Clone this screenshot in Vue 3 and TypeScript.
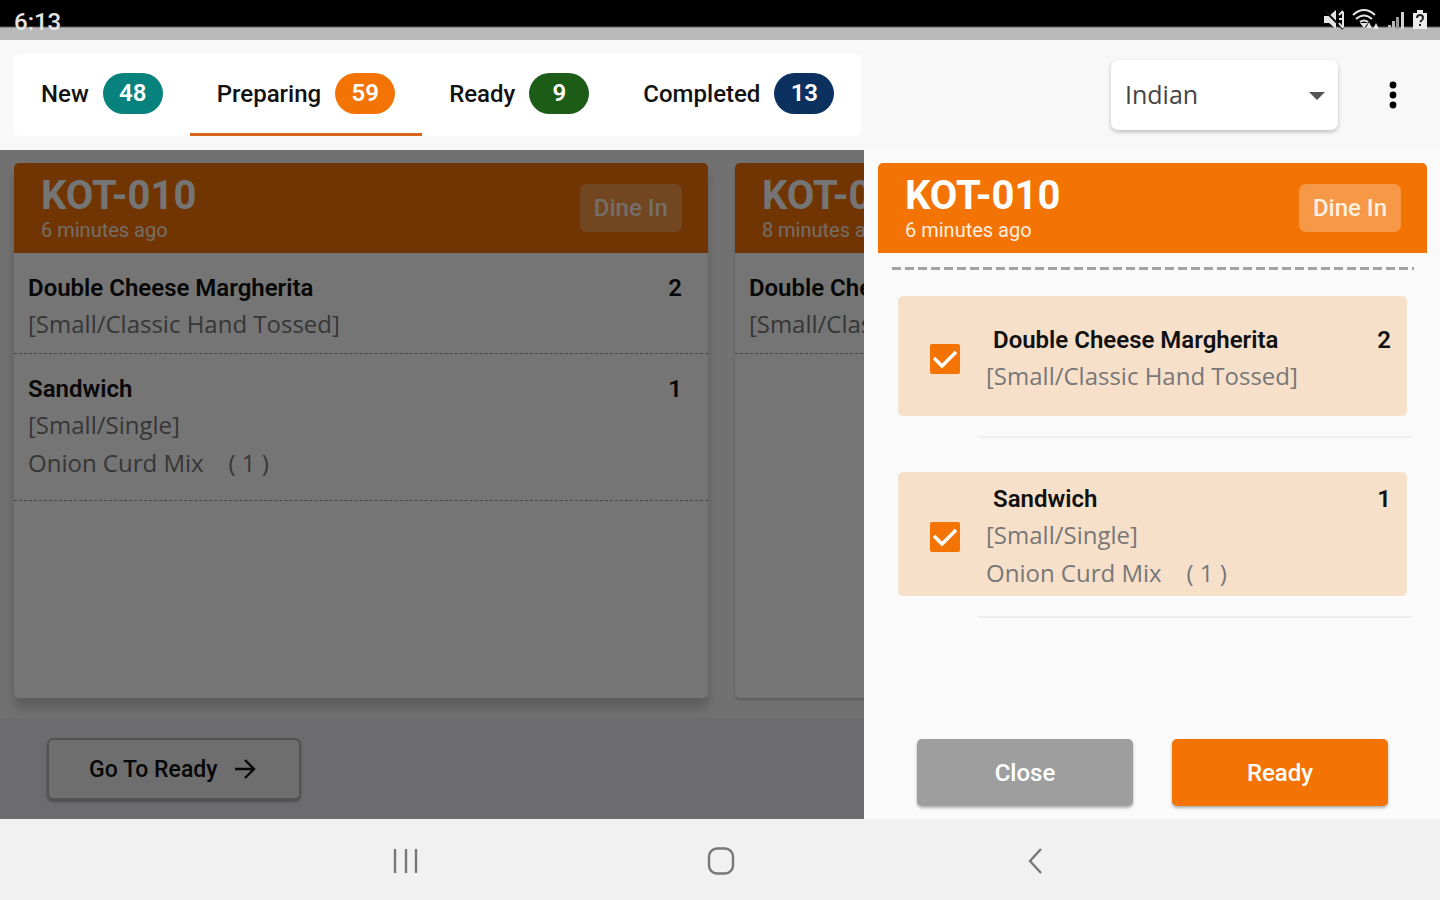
<script setup lang="ts">
import { computed, ref } from 'vue'

interface OrderItem {
  id: string
  name: string
  qty: number
  lines: string[]
  done: boolean
}

interface Ticket {
  id: string
  code: string
  age: string
  type: string
  items: OrderItem[]
}

const tabs = [
  { key: 'new', label: 'New', count: 48 },
  { key: 'preparing', label: 'Preparing', count: 59 },
  { key: 'ready', label: 'Ready', count: 9 },
  { key: 'completed', label: 'Completed', count: 13 },
]
const activeTab = ref('preparing')
const kitchen = ref('Indian')

const margherita = (id: string): OrderItem => ({
  id,
  name: 'Double Cheese Margherita',
  qty: 2,
  lines: ['[Small/Classic Hand Tossed]'],
  done: true,
})

const tickets = ref<Ticket[]>([
  {
    id: 't1',
    code: 'KOT-010',
    age: '6 minutes ago',
    type: 'Dine In',
    items: [
      margherita('t1-a'),
      {
        id: 't1-b',
        name: 'Sandwich',
        qty: 1,
        lines: ['[Small/Single]', 'Onion Curd Mix \u00a0\u00a0 ( 1 )'],
        done: true,
      },
    ],
  },
  { id: 't2', code: 'KOT-009', age: '8 minutes ago', type: 'Dine In', items: [margherita('t2-a')] },
])
const selected = computed(() => tickets.value[0])
</script>

<template>
  <div class="screen">
    <div class="status">
      <span class="clock">6:13</span>
      <div class="status-icons">
        <svg width="22" height="22" viewBox="0 0 22 22" aria-hidden="true">
          <path d="M1 7h5l7-6v19l-7-6H1z" fill="#e4e4e4" />
          <path d="M2 2l18 18" stroke="#111" stroke-width="2" />
          <path d="M16 6l4-4M16 10h4M16 14l4 5M20 3v15" stroke="#e4e4e4" stroke-width="2" fill="none" />
        </svg>
        <svg width="28" height="22" viewBox="0 0 28 22" aria-hidden="true">
          <path d="M1 6q11-10 22 0M4 10q8-7 16 0M8 13q4-3 8 0" stroke="#e4e4e4" stroke-width="2" fill="none" />
          <path d="M8 14h8l-4 5zM17 13l3 6h-6zM21 20l3-6 3 6z" fill="#e4e4e4" />
        </svg>
        <svg width="18" height="22" viewBox="0 0 18 22" aria-hidden="true">
          <path d="M1 16h3v4H1zM5 12h3v8H5z" fill="#b8b8b8" />
          <path d="M9 8h3v12H9z" fill="#999" />
          <path d="M14 3h3v17h-3z" fill="#d4d4d4" />
        </svg>
        <svg width="16" height="22" viewBox="0 0 16 22" aria-hidden="true">
          <path d="M5 1h6v3h4v16H1V4h4z" fill="#ececec" />
          <path d="M5 9q0-3 3-3t3 3q0 2-3 4M8 15v2" stroke="#222" stroke-width="2" fill="none" />
        </svg>
      </div>
    </div>

    <header class="topbar">
      <div class="tabs" role="tablist">
        <button
          v-for="tab in tabs"
          :key="tab.key"
          type="button"
          role="tab"
          class="tab"
          :class="{ active: tab.key === activeTab }"
          :aria-selected="tab.key === activeTab"
          @click="activeTab = tab.key"
        >
          {{ tab.label }}
          <span class="count" :class="tab.key">{{ tab.count }}</span>
        </button>
      </div>
      <div class="picker">
        <select v-model="kitchen" aria-label="Kitchen">
          <option>Indian</option>
        </select>
        <svg class="caret" width="16" height="8" viewBox="0 0 16 8" aria-hidden="true">
          <path d="M0 0h16L8 8z" fill="#555" />
        </svg>
      </div>
      <button type="button" class="more" aria-label="More options">
        <svg width="8" height="28" viewBox="0 0 8 28" aria-hidden="true">
          <circle cx="4" cy="4" r="3.4" /><circle cx="4" cy="14" r="3.4" /><circle cx="4" cy="24" r="3.4" />
        </svg>
      </button>
    </header>

    <div class="workspace">
      <main class="board">
        <div class="tickets">
          <article v-for="ticket in tickets" :key="ticket.id" class="ticket">
            <div class="ticket-head">
              <div>
                <h2>{{ ticket.code }}</h2>
                <p>{{ ticket.age }}</p>
              </div>
              <span class="type">{{ ticket.type }}</span>
            </div>
            <ul class="lines">
              <li v-for="item in ticket.items" :key="item.id">
                <div class="row"><strong>{{ item.name }}</strong><strong>{{ item.qty }}</strong></div>
                <p v-for="(line, i) in item.lines" :key="line" :class="{ addon: i > 0 }">{{ line }}</p>
              </li>
            </ul>
          </article>
        </div>
        <div class="board-foot">
          <button type="button" class="goto">
            Go To Ready
            <svg width="22" height="20" viewBox="0 0 22 20" aria-hidden="true">
              <path d="M1 10h19M11 1l9 9-9 9" stroke="#111" stroke-width="2.4" fill="none" />
            </svg>
          </button>
        </div>
        <div class="scrim"></div>
      </main>

      <aside class="drawer">
        <div class="ticket-head">
          <div>
            <h2>{{ selected.code }}</h2>
            <p>{{ selected.age }}</p>
          </div>
          <span class="type">{{ selected.type }}</span>
        </div>
        <div class="perforation"></div>
        <ul class="checks">
          <li v-for="item in selected.items" :key="item.id">
            <label class="check">
              <span class="box">
                <input v-model="item.done" type="checkbox" />
                <svg width="30" height="30" viewBox="0 0 30 30" aria-hidden="true">
                  <path d="M4 14l8 8L26 8" stroke="#fff" stroke-width="3.4" fill="none" />
                </svg>
              </span>
              <span class="detail">
                <span class="row name"><strong>{{ item.name }}</strong><strong>{{ item.qty }}</strong></span>
                <span v-for="line in item.lines" :key="line" class="option">{{ line }}</span>
              </span>
            </label>
          </li>
        </ul>
        <div class="actions">
          <button type="button" class="close">Close</button>
          <button type="button" class="ready">Ready</button>
        </div>
      </aside>
    </div>

    <nav class="system">
      <button type="button" aria-label="Recent apps">
        <svg width="28" height="28" viewBox="0 0 28 28" aria-hidden="true">
          <path d="M3 2v24M14 2v24M24 2v24" />
        </svg>
      </button>
      <button type="button" aria-label="Home">
        <svg width="28" height="28" viewBox="0 0 28 28" aria-hidden="true">
          <rect x="2" y="1.5" width="24" height="25" rx="8" />
        </svg>
      </button>
      <button type="button" aria-label="Back">
        <svg width="28" height="28" viewBox="0 0 28 28" aria-hidden="true">
          <path d="M19 2L8 14l11 12" />
        </svg>
      </button>
    </nav>
  </div>
</template>

<style>
body {
  margin: 0;
}
</style>

<style scoped>
.screen {
  display: flex;
  flex-direction: column;
  min-height: 100vh;
  font-family: Roboto, 'Liberation Sans', sans-serif;
  font-size: 24px;
  color: #111;
  background: #fafafa;
}
* {
  box-sizing: border-box;
}
button,
select {
  font: inherit;
  color: inherit;
  border: 0;
  margin: 0;
  padding: 0;
  background: none;
}
h2,
p,
ul {
  margin: 0;
  padding: 0;
  list-style: none;
}
strong {
  font-weight: 600;
}

.status {
  display: flex;
  align-items: center;
  justify-content: space-between;
  height: 40px;
  padding: 0 12px 0 14px;
  color: #e4e4e4;
  background: linear-gradient(#000 26px, #b9b9b9 28px);
}
.clock {
  padding-top: 4px;
  font-weight: 500;
}
.status-icons {
  display: flex;
  gap: 7px;
}

.topbar {
  display: flex;
  align-items: center;
  height: 110px;
  padding: 0 27px 0 14px;
  background: #f8f8f8;
}
.tabs {
  display: flex;
  height: 82px;
  background: #fff;
  border-radius: 6px;
}
.tab {
  display: flex;
  align-items: center;
  gap: 14px;
  padding: 0 27px;
  font-weight: 500;
  border-bottom: 3px solid transparent;
}
.tab.active {
  border-bottom-color: #d8651b;
}
.count {
  width: 60px;
  border-radius: 21px;
  line-height: 41px;
  text-align: center;
  font-weight: 600;
  color: #fff;
}
.count.new {
  background: #07827d;
}
.count.preparing {
  background: #f37405;
}
.count.ready {
  background: #1c5c17;
}
.count.completed {
  background: #0c315f;
}
.picker {
  position: relative;
  width: 227px;
  margin-left: auto;
}
.picker select {
  display: block;
  width: 100%;
  height: 70px;
  padding: 0 40px 2px 14px;
  appearance: none;
  font-family: 'Open Sans', 'Noto Sans', sans-serif;
  font-size: 25px;
  color: #444;
  background: #fff;
  border-radius: 7px;
  box-shadow: 0 2px 4px rgba(0, 0, 0, 0.24);
}
.caret {
  position: absolute;
  top: 32px;
  right: 13px;
  pointer-events: none;
}
.more {
  display: flex;
  justify-content: center;
  width: 40px;
  margin: 0 0 0 35px;
}

.workspace {
  display: flex;
  flex: 1;
}
.board {
  position: relative;
  display: flex;
  flex-direction: column;
  flex: 0 0 60%;
  min-width: 0;
  overflow: hidden;
  background: #f7f7f8;
}
.scrim {
  position: absolute;
  inset: 0;
  background: rgba(0, 0, 0, 0.54);
}
.tickets {
  display: flex;
  flex: 1;
  gap: 27px;
  padding: 13px 14px 20px;
}
.ticket {
  flex: 0 0 83%;
  background: #fff;
  border-radius: 5px;
  box-shadow: 0 2px 3px rgba(0, 0, 0, 0.2);
}
.ticket:first-child {
  box-shadow: 0 10px 12px rgba(0, 0, 0, 0.2);
}
.ticket-head {
  display: flex;
  align-items: center;
  justify-content: space-between;
  height: 90px;
  padding: 0 26px 0 27px;
  color: #fff;
  background: #f37405;
  border-radius: 5px 5px 0 0;
}
.ticket-head h2 {
  font-size: 40px;
  line-height: 44px;
  font-weight: 700;
}
.ticket-head p {
  font-size: 20px;
  line-height: 24px;
  color: #ffeedd;
}
.type {
  padding: 0 14px;
  line-height: 48px;
  font-weight: 500;
  color: #fff0e0;
  background: #f69846;
  border-radius: 7px;
}
.row {
  display: flex;
  justify-content: space-between;
  line-height: 34px;
}
.lines li {
  padding: 18px 26px 10px 14px;
  border-bottom: 1px dashed #999;
}
.lines p,
.option {
  font-family: 'Open Sans', 'Noto Sans', sans-serif;
  line-height: 38px;
  color: #777;
}
.lines .addon {
  padding-bottom: 8px;
}
.board-foot {
  padding: 20px 47px 19px;
  background: #ebecf0;
}
.goto {
  display: flex;
  align-items: center;
  gap: 16px;
  height: 62px;
  padding: 0 43px 0 40px;
  font-size: 23px;
  font-weight: 500;
  background: #efeff1;
  border: 2px solid #b4b4b4;
  border-radius: 6px;
  box-shadow: 0 2px 3px rgba(0, 0, 0, 0.3);
}

.drawer {
  display: flex;
  flex-direction: column;
  flex: 1;
  padding: 13px 13px 13px 14px;
  background: #fafafa;
}
.perforation {
  height: 3px;
  margin: 14px 13px 26px 14px;
  background: repeating-linear-gradient(90deg, #a2a2a2 0 9px, transparent 9px 13px);
}
.checks {
  flex: 1;
  padding: 0 20px;
}
.checks li::after {
  content: '';
  display: block;
  height: 2px;
  margin: 20px -5px 34px 80px;
  background: #efefef;
}
.check {
  display: flex;
  align-items: center;
  min-height: 120px;
  padding: 10px 16px 4px 32px;
  background: #f7e0ca;
  border-radius: 5px;
}
.box {
  display: grid;
  margin-right: 26px;
}
.box input,
.box svg {
  grid-area: 1 / 1;
}
.box input {
  appearance: none;
  width: 30px;
  height: 30px;
  margin: 0;
  border: 3px solid #f37405;
  border-radius: 2px;
}
.box input:checked {
  background: #f37405;
}
.box svg {
  pointer-events: none;
}
.box input:not(:checked) + svg {
  visibility: hidden;
}
.detail {
  flex: 1;
}
.name {
  padding-left: 7px;
}
.option {
  display: block;
}
.actions {
  display: flex;
  gap: 39px;
  padding: 0 39px;
}
.actions button {
  flex: 1;
  height: 67px;
  font-weight: 500;
  color: #fff;
  border-radius: 5px;
  box-shadow: 0 2px 3px rgba(0, 0, 0, 0.3);
}
.actions .close {
  background: #9e9e9e;
}
.actions .ready {
  background: #f37405;
}

.system {
  display: flex;
  align-items: center;
  justify-content: center;
  gap: 287px;
  height: 81px;
  padding: 3px 0 0 2px;
  background: #f1f1f1;
}
.system button {
  display: flex;
}
.system svg {
  fill: none;
  stroke: #777;
  stroke-width: 2.4;
}
</style>
